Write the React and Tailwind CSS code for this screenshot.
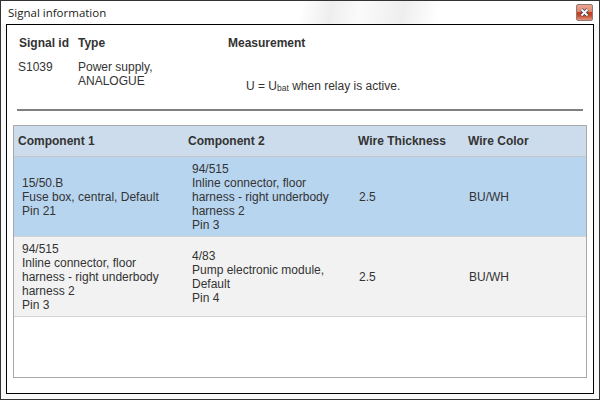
import React from "react";

const ROWS = [
  {
    first: ["15/50.B", "Fuse box, central, Default", "Pin 21"],
    second: ["94/515", "Inline connector, floor", "harness - right underbody", "harness 2", "Pin 3"],
    thickness: "2.5",
    color: "BU/WH",
    className: "bg-[#b8d5f0]",
  },
  {
    first: ["94/515", "Inline connector, floor", "harness - right underbody", "harness 2", "Pin 3"],
    second: ["4/83", "Pump electronic module,", "Default", "Pin 4"],
    thickness: "2.5",
    color: "BU/WH",
    className: "bg-[#f2f2f2]",
  },
];

function Lines({ lines }) {
  return (
    <div className="leading-[14px]">
      {lines.map((line, i) => (
        <div key={i}>{line}</div>
      ))}
    </div>
  );
}

function CloseButton() {
  return (
    <div className="w-[17px] h-[17px] rounded-[2px] border border-[#8f7a76] bg-[linear-gradient(#eba592_0%,#e08a72_45%,#c2401f_50%,#c84a2a_70%,#e29380_100%)] flex items-center justify-center">
      <svg width="11" height="9" viewBox="0 0 11 9">
        <path d="M2.5 1.5 L8.5 7.5 M8.5 1.5 L2.5 7.5" stroke="#3c3f58" strokeWidth="3.4" />
        <path d="M2.5 1.5 L8.5 7.5 M8.5 1.5 L2.5 7.5" stroke="#ffffff" strokeWidth="1.8" />
      </svg>
    </div>
  );
}

export default function App() {
  return (
    <div className="w-[600px] h-[400px] border border-[#333333] bg-[#f8f8f8] flex flex-col px-[5px] pb-[5px] font-['Liberation_Sans',Arial,sans-serif] text-[12px] text-[#333333]">
      <div className="h-[23px] flex items-center justify-between -mx-[5px] pl-[7px] pr-[6px] bg-[linear-gradient(100deg,#ffffff_50%,#eeeeee_55%,#fbfbfb_60%,#eeeeee_67%,#ffffff_73%)]">
        <span className="font-['Open_Sans','Noto_Sans',sans-serif] text-[11.5px] text-[#222222] mt-[1px]">Signal information</span>
        <CloseButton />
      </div>
      <div className="flex-1 border border-black bg-white flex flex-col pt-[11px] px-[6px] pb-[15px]">
        <div className="h-[73px] flex pl-[6px]">
          <div className="w-[59px]">
            <div className="font-bold leading-[14px]">Signal id</div>
            <div className="mt-[10px] leading-[14px] -ml-[1px]">S1039</div>
          </div>
          <div className="w-[150px]">
            <div className="font-bold leading-[14px]">Type</div>
            <div className="mt-[10px] leading-[14px]">
              Power supply,
              <br />
              ANALOGUE
            </div>
          </div>
          <div className="flex-1">
            <div className="font-bold leading-[14px]">Measurement</div>
            <div className="mt-[29px] pl-[18px] leading-[14px]">
              U = U<sub className="static text-[8.5px] align-[-1px] leading-none">bat</sub> when relay is active.
            </div>
          </div>
        </div>
        <div className="h-[2px] bg-[#808080] ml-[4px] mr-[4px]"></div>
        <div className="mt-[14px] flex-1 border border-[#a9a9a9]">
          <div className="h-[31px] grid grid-cols-[170px_170px_110px_1fr] items-center pl-[4px] bg-[#ccdcec] border-b border-[#c8c8c8] font-bold">
            <div>Component 1</div>
            <div>Component 2</div>
            <div>Wire Thickness</div>
            <div>Wire Color</div>
          </div>
          {ROWS.map((row, i) => (
            <div
              key={i}
              className={`h-[80px] grid grid-cols-[170px_170px_110px_1fr] items-center border-b border-[#d4d4d4] ${row.className}`}
            >
              <div className="pl-[8px]">
                <Lines lines={row.first} />
              </div>
              <div className="pl-[8px]">
                <Lines lines={row.second} />
              </div>
              <div className="pl-[5px]">{row.thickness}</div>
              <div className="pl-[5px]">{row.color}</div>
            </div>
          ))}
        </div>
      </div>
    </div>
  );
}
